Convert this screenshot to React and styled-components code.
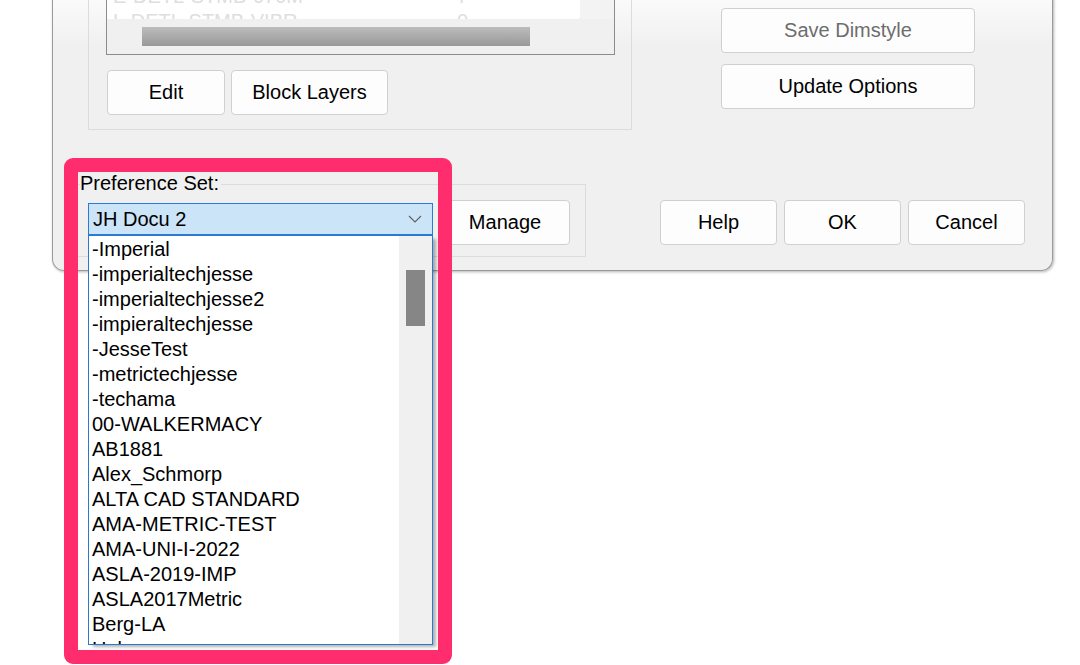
import React from 'react';
import styled, { createGlobalStyle } from 'styled-components';

const presets = [
  '-Imperial',
  '-imperialtechjesse',
  '-imperialtechjesse2',
  '-impieraltechjesse',
  '-JesseTest',
  '-metrictechjesse',
  '-techama',
  '00-WALKERMACY',
  'AB1881',
  'Alex_Schmorp',
  'ALTA CAD STANDARD',
  'AMA-METRIC-TEST',
  'AMA-UNI-I-2022',
  'ASLA-2019-IMP',
  'ASLA2017Metric',
  'Berg-LA',
  'Helm',
];

function App() {
  return (
    <Page>
      <GlobalStyle />
      <Dialog>
        <TopArea>
          <LayerGroup>
            <ListBox>
              <Rows>
                <FadedRow><span>E-DETL-STMB-070M</span><span>7</span></FadedRow>
                <FadedRow><span>L-DETL-STMB-VIBR</span><span>0</span></FadedRow>
              </Rows>
              <SideTrack />
              <HTrack><HThumb /></HTrack>
              <Corner />
            </ListBox>
            <ButtonRow>
              <Button $w={118}>Edit</Button>
              <Button $w={157}>Block Layers</Button>
            </ButtonRow>
          </LayerGroup>
          <SideButtons>
            <Button $w={254} $disabled>Save Dimstyle</Button>
            <Button $w={254}>Update Options</Button>
          </SideButtons>
        </TopArea>

        <BottomArea>
          <PrefGroup>
            <Legend>Preference Set:</Legend>
            <PrefRow>
              <Combo>
                <ComboField>
                  <span>JH Docu 2</span>
                  <svg width="14" height="8" viewBox="0 0 14 8">
                    <polyline points="1,1 7,7 13,1" fill="none" stroke="#5f5f5f" strokeWidth="1.1" />
                  </svg>
                </ComboField>
                <DropList>
                  <Items>
                    {presets.map((name) => (
                      <Item key={name}>{name}</Item>
                    ))}
                  </Items>
                  <ScrollTrack><ScrollThumb /></ScrollTrack>
                </DropList>
              </Combo>
              <Button $w={130}>Manage</Button>
            </PrefRow>
          </PrefGroup>
          <DialogButtons>
            <Button $w={117}>Help</Button>
            <Button $w={117}>OK</Button>
            <Button $w={117}>Cancel</Button>
          </DialogButtons>
        </BottomArea>
      </Dialog>
      <Highlight />
    </Page>
  );
}

const GlobalStyle = createGlobalStyle`
  html, body {
    margin: 0;
    padding: 0;
    background: #fff;
  }
  body {
    font-family: "Liberation Sans", Arial, sans-serif;
  }
  * {
    box-sizing: border-box;
  }
`;

const Page = styled.div`
  position: relative;
  width: 1080px;
  height: 665px;
  overflow: hidden;
  background: #fff;
`;

const Dialog = styled.div`
  margin: -59px 0 0 52px;
  width: 1001px;
  padding-bottom: 13px;
  background: linear-gradient(to bottom, #f6f6f6 0, #fafafa 60px, #f0f0f0 105px, #f0f0f0 100%);
  border: 1px solid #9a9a9a;
  border-top: none;
  border-radius: 0 0 12px 12px;
  box-shadow: 1px 1px 3px rgba(0, 0, 0, 0.3);
  font-size: 20px;
  color: #000;
`;

const TopArea = styled.div`
  display: flex;
  align-items: flex-start;
  padding-left: 35px;
`;

const LayerGroup = styled.div`
  width: 544px;
  padding: 19px 16px 14px 17px;
  border: 1px solid #dcdcdc;
  border-top: none;
`;

const ListBox = styled.div`
  display: grid;
  grid-template-columns: 1fr 34px;
  grid-template-rows: 59px 35px;
  width: 509px;
  height: 95px;
  border: 1px solid #8c8c8c;
  border-top: none;
  background: #f0f0f0;
`;

const Rows = styled.div`
  overflow: hidden;
  padding: 24px 0 0 6px;
  background: #fff;
  border-bottom-right-radius: 3px;
`;

const FadedRow = styled.div`
  display: flex;
  line-height: 25px;
  color: #dedede;
  white-space: nowrap;

  span:first-child {
    width: 344px;
  }
`;

const SideTrack = styled.div`
  background: #f3f3f3;
`;

const HTrack = styled.div`
  padding: 8px 0 0 35px;
  background: #f0f0f0;
`;

const HThumb = styled.div`
  width: 388px;
  height: 19px;
  background: linear-gradient(to bottom, #bcbcbc, #999999);
`;

const Corner = styled.div`
  background: #f0f0f0;
`;

const ButtonRow = styled.div`
  display: flex;
  gap: 6px;
  margin: 15px 0 0 1px;
`;

const Button = styled.div`
  display: flex;
  align-items: center;
  justify-content: center;
  flex: none;
  width: ${(p) => p.$w}px;
  height: 45px;
  background: #fdfdfd;
  border: 1px solid #d0d0d0;
  border-radius: 4px;
  color: ${(p) => (p.$disabled ? '#6d6d6d' : '#000')};
  font-size: 20px;
`;

const SideButtons = styled.div`
  display: flex;
  flex-direction: column;
  gap: 11px;
  margin: 67px 0 0 89px;
`;

const BottomArea = styled.div`
  display: flex;
  align-items: flex-start;
  margin-top: 54px;
  padding: 0 27px 0 19px;
`;

const PrefGroup = styled.div`
  width: 514px;
  padding-bottom: 11px;
  border: 1px solid #dcdcdc;
`;

const Legend = styled.div`
  width: fit-content;
  margin: -13px 0 0 7px;
  padding-right: 2px;
  line-height: 23px;
  background: #f0f0f0;
`;

const PrefRow = styled.div`
  display: flex;
  align-items: flex-start;
  gap: 7px;
  margin-top: 5px;
  padding-left: 15px;
`;

const Combo = styled.div`
  position: relative;
  width: 345px;
  margin-top: 3px;
`;

const ComboField = styled.div`
  display: flex;
  align-items: center;
  justify-content: space-between;
  height: 32px;
  padding: 0 10px 0 4px;
  background: #cce4f7;
  border: 1px solid #2a7bd3;
`;

const DropList = styled.div`
  position: absolute;
  top: 100%;
  left: 0;
  z-index: 3;
  display: grid;
  grid-template-columns: 1fr 33px;
  width: 345px;
  height: 410px;
  background: #fff;
  border: 1px solid #2a78d0;
  box-shadow: 4px 3px 3px -1px rgba(0, 0, 0, 0.3);
`;

const Items = styled.div`
  overflow: hidden;
  padding: 1px 0 0 3px;
`;

const Item = styled.div`
  line-height: 25px;
  white-space: nowrap;
`;

const ScrollTrack = styled.div`
  padding: 34px 7px 0 7px;
  background: #f0f0f0;
`;

const ScrollThumb = styled.div`
  height: 56px;
  background: #868686;
`;

const DialogButtons = styled.div`
  display: flex;
  gap: 7px;
  margin: 16px 0 0 auto;
`;

const Highlight = styled.div`
  position: absolute;
  left: 64px;
  top: 158px;
  z-index: 5;
  width: 388px;
  height: 506px;
  border: 14px solid #ff2d6d;
  border-radius: 9px;
`;

export default App;
